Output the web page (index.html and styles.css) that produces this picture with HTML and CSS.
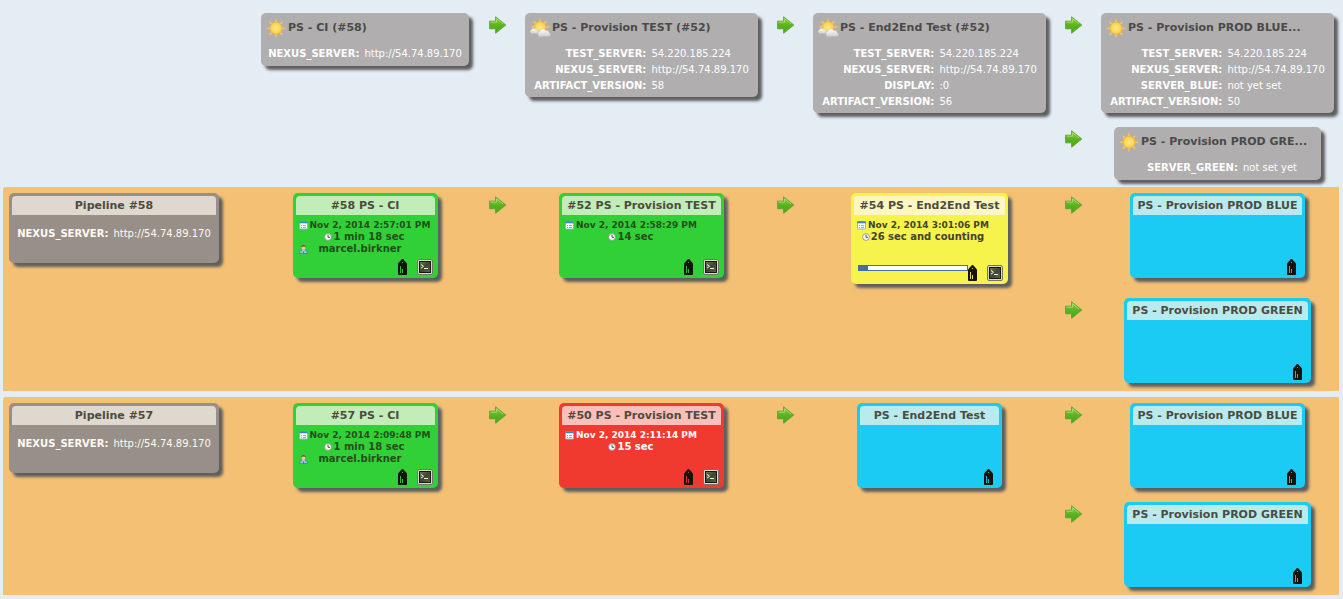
FILE: index.html
```html
<!DOCTYPE html>
<html lang="en">
<head>
<meta charset="utf-8">
<title>Build Pipeline</title>
<link rel="stylesheet" href="styles.css">
</head>
<body>
<svg class="defs" aria-hidden="true">
  <defs>
    <linearGradient id="g-arrow" x1="0" y1="0" x2="0" y2="1"><stop offset="0" stop-color="#8fd048"/><stop offset=".5" stop-color="#5db41f"/><stop offset="1" stop-color="#4aa512"/></linearGradient>
    <radialGradient id="g-sun"><stop offset="0" stop-color="#fff08a"/><stop offset="1" stop-color="#fccb3c"/></radialGradient>
    <linearGradient id="g-cloud" x1="0" y1="0" x2="0" y2="1"><stop offset="0" stop-color="#ffffff"/><stop offset="1" stop-color="#cfcfcf"/></linearGradient>
    <linearGradient id="g-term" x1="0" y1="0" x2="1" y2="1"><stop offset="0" stop-color="#6f7a5c"/><stop offset=".5" stop-color="#3c4632"/><stop offset="1" stop-color="#5d6a45"/></linearGradient>
  </defs>
  <symbol id="arrow" viewBox="0 0 18 18">
    <path d="M1 14.500h6v3.300l4-3.300z" fill="#000" opacity=".1"/>
    <path d="M.6 5.200H6.600V.800L16.800 9L6.600 17.200V12.800H.600Z" fill="url(#g-arrow)" stroke="#55a535" stroke-width=".9" stroke-linejoin="round"/>
    <path d="M1.500 6.200H7.600V2.800L14 8" fill="none" stroke="#b4e07e" stroke-width=".8"/>
  </symbol>
  <symbol id="sun" viewBox="0 0 22 22">
    <path d="M11 1l-1.200 4h2.400zM11 21.500l-1.200-4h2.400zM.8 11.200l4-1.200v2.400zM21.200 11.200l-4-1.200v2.400zM4 4l3.300 1.900-1.600 1.600zM18 4l-3.300 1.900 1.600 1.600zM4 18.600l1.700-3.500 1.600 1.600zM18 18.600l-1.700-3.500-1.600 1.600z" fill="#f6c56a"/>
    <circle cx="11" cy="11.200" r="6" fill="url(#g-sun)" stroke="#f2b43c" stroke-width=".8"/>
  </symbol>
  <symbol id="cloudy" viewBox="0 0 22 22">
    <path d="M11 1l-1.200 4h2.400zM1 10l4-1.200v2.400zM21.500 10l-4-1.200v2.400zM4 3.600l3.300 1.900-1.600 1.600zM18 3.600l-3.300 1.900 1.600 1.600zM11 21.500l-1.200-4h2.400z" fill="#f6c56a"/>
    <circle cx="11" cy="10.500" r="6" fill="url(#g-sun)" stroke="#f2b43c" stroke-width=".8"/>
    <path d="M2.500 16.500a2 2 0 0 1-.3-3.600 2.300 2.300 0 0 1 4-.6 2.300 2.300 0 0 1 2.800 1.700v2.500z" fill="url(#g-cloud)" stroke="#c4c4c4" stroke-width=".5"/>
    <path d="M11 19.600a2.600 2.600 0 0 1-.6-5 3.500 3.500 0 0 1 6.300-1.200 2.700 2.700 0 0 1 3.400 2.200 2.100 2.100 0 0 1 0 4z" fill="url(#g-cloud)" stroke="#b8b8b8" stroke-width=".5"/>
  </symbol>
  <symbol id="calendar" viewBox="0 0 9 9">
    <rect x=".5" y=".5" width="8" height="7.500" rx=".6" fill="#fff" stroke="#8fb4d0"/>
    <rect x=".3" y=".3" width="8.400" height="2" fill="#3b86c0"/>
    <path d="M2 4.500h1M4 4.500h3M2 6.500h1M4 6.500h3" stroke="#9aa8b8"/>
  </symbol>
  <symbol id="clock" viewBox="0 0 8 8">
    <circle cx="4" cy="4" r="3.400" fill="#fff" stroke="#888" stroke-width=".8"/>
    <path d="M4 1.800V4.300H6" fill="none" stroke="#333" stroke-width=".9"/>
  </symbol>
  <symbol id="person" viewBox="0 0 9 10">
    <path d="M.5 9.500C.5 7 2 6 4.500 6S8.500 7 8.500 9.500Z" fill="#8fc4e8" stroke="#3a6f9a" stroke-width=".6"/>
    <path d="M3.500 6l1 3 1-3z" fill="#fff"/><path d="M4.200 6.500h.6l.2 2.500h-1z" fill="#c33"/>
    <ellipse cx="4.500" cy="3.400" rx="2" ry="2.600" fill="#f3c89a"/>
    <path d="M2.200 3.800C1.800 0 7.200 0 6.800 3.800 6.300 2 3 2 2.200 3.800Z" fill="#6a3c16"/>
  </symbol>
  <symbol id="tag" viewBox="0 0 9 16">
    <path d="M4 0h1l4 4.500V15q0 1-1 1H1q-1 0-1-1V4.500z" fill="#15130c"/>
    <circle cx="4.500" cy="3.500" r=".6" fill="currentColor"/>
    <path d="M2.500 7v7M4.500 10v4" stroke="currentColor" stroke-width=".9"/>
  </symbol>
  <symbol id="terminal" viewBox="0 0 16 16">
    <rect x=".5" y=".5" width="15" height="15" rx="1.500" fill="#ddd8cb" stroke="#77736a"/>
    <rect x="2.500" y="2.500" width="11" height="11" fill="url(#g-term)" stroke="#17190f"/>
    <path d="M4 5.500l2.500 1.800L4 9.200M7 9.500h4" fill="none" stroke="#f4f4e6"/>
  </symbol>
</svg>

<main class="pipeline">
  <section class="row row-head">
    <article class="card project project-ci s1">
      <h2 class="project-title"><svg class="weather"><use href="#sun"/></svg>PS - CI (#58)</h2>
      <table class="params"><tr><th scope="row">NEXUS_SERVER:</th><td>http://54.74.89.170</td></tr></table>
    </article>
    <svg class="arrow a1"><use href="#arrow"/></svg>
    <article class="card project s2">
      <h2 class="project-title"><svg class="weather"><use href="#cloudy"/></svg>PS - Provision TEST (#52)</h2>
      <table class="params">
        <tr><th scope="row">TEST_SERVER:</th><td>54.220.185.224</td></tr>
        <tr><th scope="row">NEXUS_SERVER:</th><td>http://54.74.89.170</td></tr>
        <tr><th scope="row">ARTIFACT_VERSION:</th><td>58</td></tr>
      </table>
    </article>
    <svg class="arrow a2"><use href="#arrow"/></svg>
    <article class="card project s3">
      <h2 class="project-title"><svg class="weather"><use href="#cloudy"/></svg>PS - End2End Test (#52)</h2>
      <table class="params">
        <tr><th scope="row">TEST_SERVER:</th><td>54.220.185.224</td></tr>
        <tr><th scope="row">NEXUS_SERVER:</th><td>http://54.74.89.170</td></tr>
        <tr><th scope="row">DISPLAY:</th><td>:0</td></tr>
        <tr><th scope="row">ARTIFACT_VERSION:</th><td>56</td></tr>
      </table>
    </article>
    <svg class="arrow a3"><use href="#arrow"/></svg>
    <article class="card project s4">
      <h2 class="project-title"><svg class="weather"><use href="#sun"/></svg>PS - Provision PROD BLUE...</h2>
      <table class="params">
        <tr><th scope="row">TEST_SERVER:</th><td>54.220.185.224</td></tr>
        <tr><th scope="row">NEXUS_SERVER:</th><td>http://54.74.89.170</td></tr>
        <tr><th scope="row">SERVER_BLUE:</th><td>not yet set</td></tr>
        <tr><th scope="row">ARTIFACT_VERSION:</th><td>50</td></tr>
      </table>
    </article>
    <svg class="arrow a3 second"><use href="#arrow"/></svg>
    <article class="card project project-green s4 second">
      <h2 class="project-title"><svg class="weather"><use href="#sun"/></svg>PS - Provision PROD GRE...</h2>
      <table class="params"><tr><th scope="row">SERVER_GREEN:</th><td>not set yet</td></tr></table>
    </article>
  </section>

  <section class="row row-build">
    <article class="card revision">
      <h2 class="title">Pipeline #58</h2>
      <table class="params"><tr><th scope="row">NEXUS_SERVER:</th><td>http://54.74.89.170</td></tr></table>
    </article>
    <article class="card build success s1">
      <h3 class="title">#58 PS - CI</h3>
      <div class="info">
        <div class="date"><svg class="i-cal"><use href="#calendar"/></svg>Nov 2, 2014 2:57:01 PM</div>
        <div class="time"><svg class="i-clock"><use href="#clock"/></svg>1 min 18 sec</div>
        <div class="user"><svg class="i-user"><use href="#person"/></svg><span>marcel.birkner</span></div>
      </div>
      <div class="tools"><button class="tool" aria-label="Trigger"><svg class="i-tag"><use href="#tag"/></svg></button><button class="tool" aria-label="Console"><svg class="i-term"><use href="#terminal"/></svg></button></div>
    </article>
    <svg class="arrow a1"><use href="#arrow"/></svg>
    <article class="card build success wide s2">
      <h3 class="title">#52 PS - Provision TEST</h3>
      <div class="info">
        <div class="date"><svg class="i-cal"><use href="#calendar"/></svg>Nov 2, 2014 2:58:29 PM</div>
        <div class="time"><svg class="i-clock"><use href="#clock"/></svg>14 sec</div>
      </div>
      <div class="tools"><button class="tool" aria-label="Trigger"><svg class="i-tag"><use href="#tag"/></svg></button><button class="tool" aria-label="Console"><svg class="i-term"><use href="#terminal"/></svg></button></div>
    </article>
    <svg class="arrow a2"><use href="#arrow"/></svg>
    <article class="card build running s3">
      <h3 class="title">#54 PS - End2End Test</h3>
      <div class="info">
        <div class="date"><svg class="i-cal"><use href="#calendar"/></svg>Nov 2, 2014 3:01:06 PM</div>
        <div class="time"><svg class="i-clock"><use href="#clock"/></svg>26 sec and counting</div>
      </div>
      <div class="tools"><div class="progress" role="progressbar" aria-valuenow="8" aria-label="Build progress"><div class="progress-done" style="width:8%"></div></div><button class="tool" aria-label="Trigger"><svg class="i-tag"><use href="#tag"/></svg></button><button class="tool" aria-label="Console"><svg class="i-term"><use href="#terminal"/></svg></button></div>
    </article>
    <svg class="arrow a3"><use href="#arrow"/></svg>
    <article class="card build pending prod-blue s4">
      <h3 class="title">PS - Provision PROD BLUE</h3>
      <div class="tools"><button class="tool" aria-label="Trigger"><svg class="i-tag"><use href="#tag"/></svg></button></div>
    </article>
    <svg class="arrow a3 second"><use href="#arrow"/></svg>
    <article class="card build pending prod-green s4 second">
      <h3 class="title">PS - Provision PROD GREEN</h3>
      <div class="tools"><button class="tool" aria-label="Trigger"><svg class="i-tag"><use href="#tag"/></svg></button></div>
    </article>
  </section>

  <section class="row row-build">
    <article class="card revision">
      <h2 class="title">Pipeline #57</h2>
      <table class="params"><tr><th scope="row">NEXUS_SERVER:</th><td>http://54.74.89.170</td></tr></table>
    </article>
    <article class="card build success s1">
      <h3 class="title">#57 PS - CI</h3>
      <div class="info">
        <div class="date"><svg class="i-cal"><use href="#calendar"/></svg>Nov 2, 2014 2:09:48 PM</div>
        <div class="time"><svg class="i-clock"><use href="#clock"/></svg>1 min 18 sec</div>
        <div class="user"><svg class="i-user"><use href="#person"/></svg><span>marcel.birkner</span></div>
      </div>
      <div class="tools"><button class="tool" aria-label="Trigger"><svg class="i-tag"><use href="#tag"/></svg></button><button class="tool" aria-label="Console"><svg class="i-term"><use href="#terminal"/></svg></button></div>
    </article>
    <svg class="arrow a1"><use href="#arrow"/></svg>
    <article class="card build failure wide s2">
      <h3 class="title">#50 PS - Provision TEST</h3>
      <div class="info">
        <div class="date"><svg class="i-cal"><use href="#calendar"/></svg>Nov 2, 2014 2:11:14 PM</div>
        <div class="time"><svg class="i-clock"><use href="#clock"/></svg>15 sec</div>
      </div>
      <div class="tools"><button class="tool" aria-label="Trigger"><svg class="i-tag"><use href="#tag"/></svg></button><button class="tool" aria-label="Console"><svg class="i-term"><use href="#terminal"/></svg></button></div>
    </article>
    <svg class="arrow a2"><use href="#arrow"/></svg>
    <article class="card build pending s3">
      <h3 class="title">PS - End2End Test</h3>
      <div class="tools"><button class="tool" aria-label="Trigger"><svg class="i-tag"><use href="#tag"/></svg></button></div>
    </article>
    <svg class="arrow a3"><use href="#arrow"/></svg>
    <article class="card build pending prod-blue s4">
      <h3 class="title">PS - Provision PROD BLUE</h3>
      <div class="tools"><button class="tool" aria-label="Trigger"><svg class="i-tag"><use href="#tag"/></svg></button></div>
    </article>
    <svg class="arrow a3 second"><use href="#arrow"/></svg>
    <article class="card build pending prod-green s4 second">
      <h3 class="title">PS - Provision PROD GREEN</h3>
      <div class="tools"><button class="tool" aria-label="Trigger"><svg class="i-tag"><use href="#tag"/></svg></button></div>
    </article>
  </section>
</main>
</body>
</html>
```

FILE: styles.css
```css
* { box-sizing: border-box; }

body {
  margin: 0;
  background: #e4ecf4;
  color: #4a4a4a;
  font-family: "DejaVu Sans", Verdana, sans-serif;
  font-size: 10px;
}

.defs { display: block; width: 0; height: 0; }

.pipeline {
  display: flex;
  flex-direction: column;
  gap: 6px;
  padding: 7px 4px 4px 3px;
}

.row {
  display: grid;
  grid-template-columns: 252fr 220fr 45px 243fr 45px 243fr 45px 243fr;
  row-gap: 14px;
  align-items: start;
  justify-items: center;
  padding: 6px 0 8px;
}
.row-head { padding-bottom: 1px; }
.row-build { background: #f4c074; border-radius: 3px 0 0 0; }

.s1 { grid-column: 2; }
.a1 { grid-column: 3; }
.s2 { grid-column: 4; }
.a2 { grid-column: 5; }
.s3 { grid-column: 6; }
.a3 { grid-column: 7; }
.s4 { grid-column: 8; }
.row > * { grid-row: 1; }
.row > .second { grid-row: 2; }

.arrow { width: 18px; height: 18px; margin-top: 3px; }

.card {
  border-radius: 5px;
  box-shadow: 4px 4px 3px #5e5e5e;
  white-space: nowrap;
}

.project {
  min-width: 233px;
  min-height: 53px;
  padding: 4px 4px 3px;
  background: #b0aeae;
}
.project-ci { min-width: 208px; }
.project-green { min-width: 207px; }

.project-title {
  display: flex;
  align-items: center;
  gap: 1px;
  margin: 0 0 7px;
  font-size: 11px;
  line-height: 22px;
}
.weather { width: 22px; height: 22px; }

.params {
  margin: 0 auto;
  border-spacing: 0;
  color: #fff;
  line-height: 16px;
}
.params th { padding: 0 5px 0 0; text-align: right; }
.params td { padding: 0; }
.project-green .params { margin-left: 29px; }

.title {
  margin: 0;
  padding: 0 3px;
  border-radius: 4px 4px 0 0;
  font-size: 11px;
  line-height: 19px;
  text-align: center;
  color: #4c4b40;
}

.revision {
  grid-column: 1;
  justify-self: start;
  min-width: 210px;
  min-height: 70px;
  margin-left: 6px;
  padding: 3px;
  background: #978f88;
}
.revision .title { margin-bottom: 11px; background: #dfd8ce; }
.revision .params { color: #fffaf3; }

.build {
  display: flex;
  flex-direction: column;
  min-width: 145px;
  min-height: 85px;
  padding: 3px;
  color: #3a4430;
}
.wide { min-width: 165px; }
.prod-blue { min-width: 175px; }
.prod-green { min-width: 187px; }

.success { background: #32d037; color: #234e1c; }
.success .title { background: #c3edb8; }
.running { min-width: 157px; min-height: 91px; background: #f6f34d; color: #43422a; }
.running .title { background: #fdf7c3; }
.failure { background: #f03a30; color: #fff; }
.failure .title { background: #fabfb8; }
.pending { background: #1bcbf3; }
.pending .title { background: #b9ebee; }

.info {
  align-self: flex-start;
  margin: 4px 3px 0;
  font-weight: bold;
  line-height: 12px;
}
.info > div { display: flex; align-items: center; justify-content: center; }
.date { gap: 2px; font-size: 9px; }
.time { gap: 1px; }
.user span { flex: 1; padding-right: 18px; text-align: center; }

.i-cal { width: 9px; height: 9px; }
.i-clock { width: 8px; height: 8px; }
.i-user { width: 9px; height: 10px; }

.tools {
  display: flex;
  justify-content: flex-end;
  gap: 10px;
  margin-top: auto;
  padding-right: 2px;
}
.tool {
  display: block;
  padding: 0;
  border: 0;
  background: none;
  color: inherit;
}
.success .tool { color: #32d037; }
.running .tool { color: #f6f34d; }
.failure .tool { color: #f03a30; }
.pending .tool { color: #1bcbf3; }
.tool svg { display: block; }
.i-tag { width: 9px; height: 16px; }
.i-term { width: 16px; height: 16px; }
.pending .tools { padding-right: 6px; }

.progress {
  flex: 1;
  height: 6px;
  margin: 0 -10px 0 4px;
  border: 1px solid #456fa5;
  background: #fff;
}
.progress-done { height: 4px; background: #456fa5; }
```
